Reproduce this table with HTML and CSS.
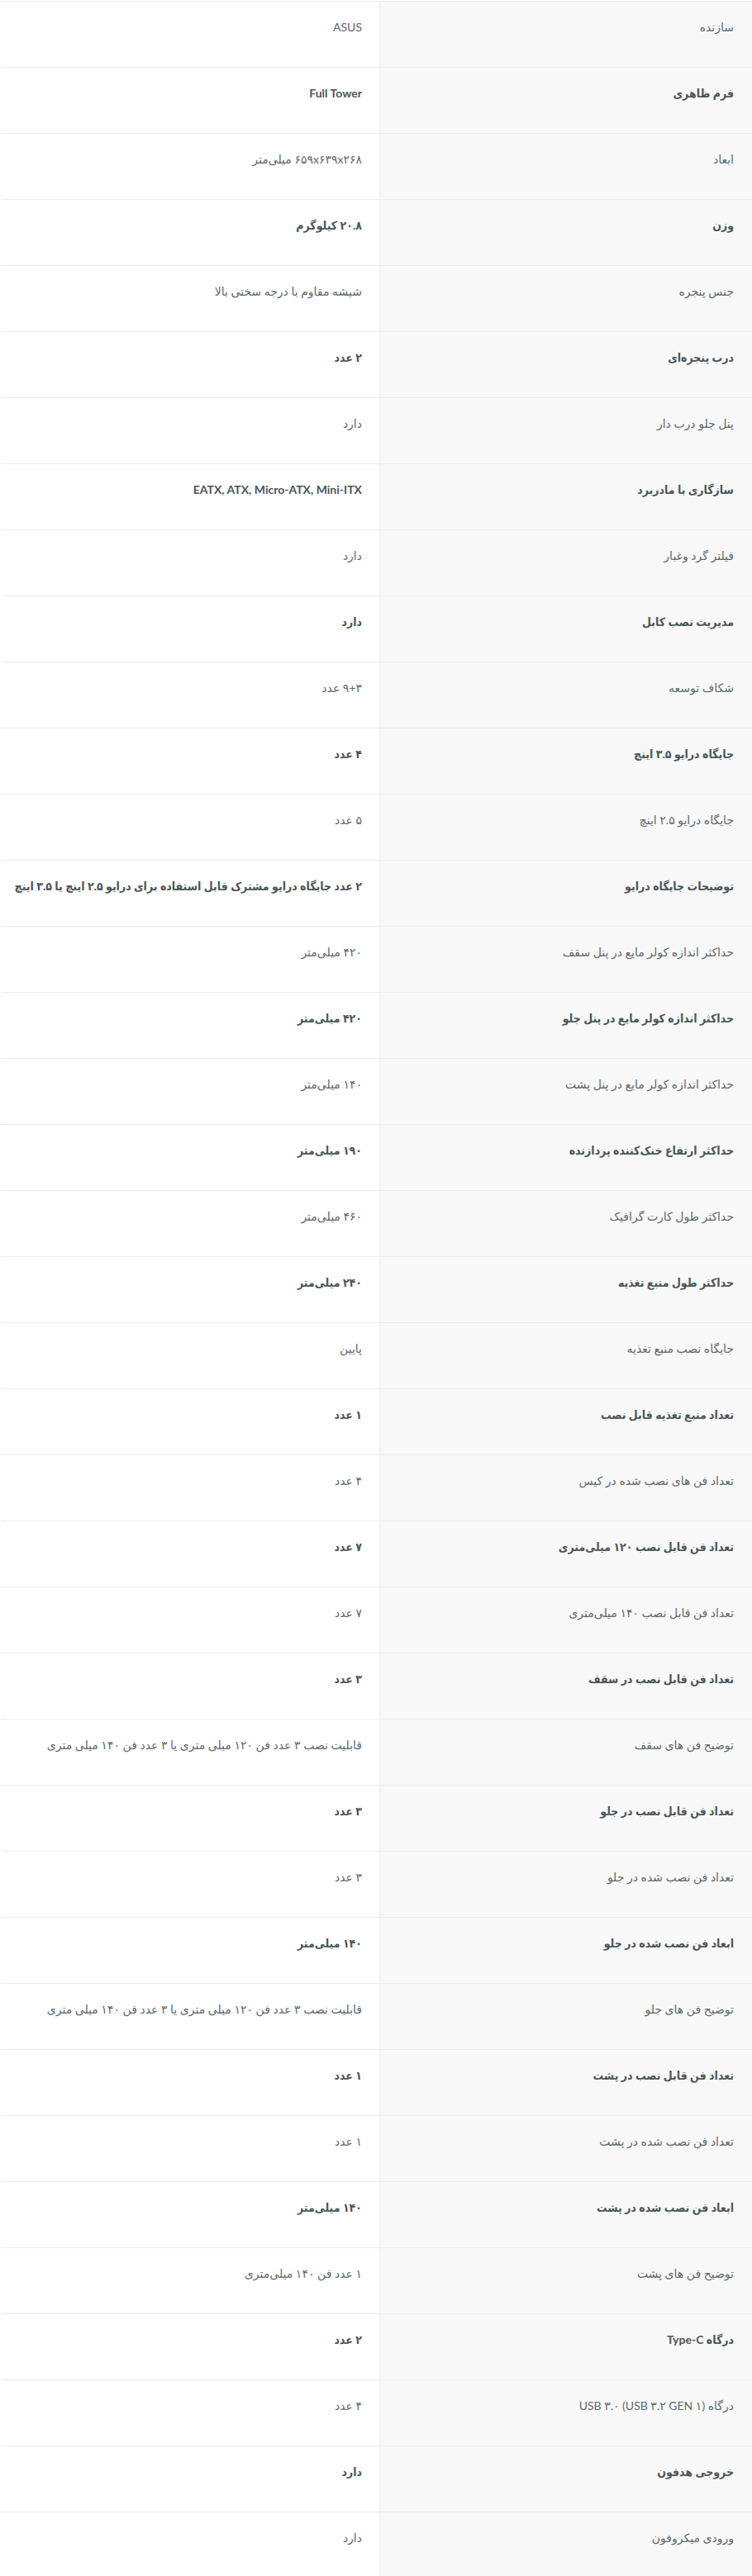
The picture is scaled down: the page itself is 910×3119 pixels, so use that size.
FILE: index.html
```html
<!DOCTYPE html>
<html lang="fa" dir="rtl">
<head>
    <meta charset="UTF-8">
    <meta name="viewport" content="width=device-width, initial-scale=1.0">
    <title>مشخصات فنی</title>
    <link rel="stylesheet" href="styles.css">
</head>
<body>

    <div class="specs">
        <div class="spec-row">
            <div class="spec-label">سازنده</div>
            <div class="spec-value">ASUS</div>
        </div>
        <div class="spec-row bold">
            <div class="spec-label">فرم ظاهری</div>
            <div class="spec-value">Full Tower</div>
        </div>
        <div class="spec-row">
            <div class="spec-label">ابعاد</div>
            <div class="spec-value">۶۵۹x۶۳۹x۲۶۸ میلی‌متر</div>
        </div>
        <div class="spec-row bold">
            <div class="spec-label">وزن</div>
            <div class="spec-value">۲۰.۸ کیلوگرم</div>
        </div>
        <div class="spec-row">
            <div class="spec-label">جنس پنجره</div>
            <div class="spec-value">شیشه مقاوم با درجه سختی بالا</div>
        </div>
        <div class="spec-row bold">
            <div class="spec-label">درب پنجره‌ای</div>
            <div class="spec-value">۲ عدد</div>
        </div>
        <div class="spec-row">
            <div class="spec-label">پنل جلو درب دار</div>
            <div class="spec-value">دارد</div>
        </div>
        <div class="spec-row bold">
            <div class="spec-label">سازگاری با مادربرد</div>
            <div class="spec-value">EATX, ATX, Micro-ATX, Mini-ITX</div>
        </div>
        <div class="spec-row">
            <div class="spec-label">فیلتر گرد وغبار</div>
            <div class="spec-value">دارد</div>
        </div>
        <div class="spec-row bold">
            <div class="spec-label">مدیریت نصب کابل</div>
            <div class="spec-value">دارد</div>
        </div>
        <div class="spec-row">
            <div class="spec-label">شکاف توسعه</div>
            <div class="spec-value">۹+۳ عدد</div>
        </div>
        <div class="spec-row bold">
            <div class="spec-label">جایگاه درایو ۳.۵ اینچ</div>
            <div class="spec-value">۴ عدد</div>
        </div>
        <div class="spec-row">
            <div class="spec-label">جایگاه درایو ۲.۵ اینچ</div>
            <div class="spec-value">۵ عدد</div>
        </div>
        <div class="spec-row bold">
            <div class="spec-label">توضیحات جایگاه درایو</div>
            <div class="spec-value">۲ عدد جایگاه درایو مشترک قابل استفاده برای درایو ۲.۵ اینچ یا ۳.۵ اینچ</div>
        </div>
        <div class="spec-row">
            <div class="spec-label">حداکثر اندازه کولر مایع در پنل سقف</div>
            <div class="spec-value">۴۲۰ میلی‌متر</div>
        </div>
        <div class="spec-row bold">
            <div class="spec-label">حداکثر اندازه کولر مایع در پنل جلو</div>
            <div class="spec-value">۴۲۰ میلی‌متر</div>
        </div>
        <div class="spec-row">
            <div class="spec-label">حداکثر اندازه کولر مایع در پنل پشت</div>
            <div class="spec-value">۱۴۰ میلی‌متر</div>
        </div>
        <div class="spec-row bold">
            <div class="spec-label">حداکثر ارتفاع خنک‌کننده پردازنده</div>
            <div class="spec-value">۱۹۰ میلی‌متر</div>
        </div>
        <div class="spec-row">
            <div class="spec-label">حداکثر طول کارت گرافیک</div>
            <div class="spec-value">۴۶۰ میلی‌متر</div>
        </div>
        <div class="spec-row bold">
            <div class="spec-label">حداکثر طول منبع تغذیه</div>
            <div class="spec-value">۲۴۰ میلی‌متر</div>
        </div>
        <div class="spec-row">
            <div class="spec-label">جایگاه نصب منبع تغذیه</div>
            <div class="spec-value">پایین</div>
        </div>
        <div class="spec-row bold">
            <div class="spec-label">تعداد منبع تغذیه قابل نصب</div>
            <div class="spec-value">۱ عدد</div>
        </div>
        <div class="spec-row">
            <div class="spec-label">تعداد فن های نصب شده در کیس</div>
            <div class="spec-value">۴ عدد</div>
        </div>
        <div class="spec-row bold">
            <div class="spec-label">تعداد فن قابل نصب ۱۲۰ میلی‌متری</div>
            <div class="spec-value">۷ عدد</div>
        </div>
        <div class="spec-row">
            <div class="spec-label">تعداد فن قابل نصب ۱۴۰ میلی‌متری</div>
            <div class="spec-value">۷ عدد</div>
        </div>
        <div class="spec-row bold">
            <div class="spec-label">تعداد فن قابل نصب در سقف</div>
            <div class="spec-value">۳ عدد</div>
        </div>
        <div class="spec-row">
            <div class="spec-label">توضیح فن های سقف</div>
            <div class="spec-value">قابلیت نصب ۳ عدد فن ۱۲۰ میلی متری یا ۳ عدد فن ۱۴۰ میلی متری</div>
        </div>
        <div class="spec-row bold">
            <div class="spec-label">تعداد فن قابل نصب در جلو</div>
            <div class="spec-value">۳ عدد</div>
        </div>
        <div class="spec-row">
            <div class="spec-label">تعداد فن نصب شده در جلو</div>
            <div class="spec-value">۳ عدد</div>
        </div>
        <div class="spec-row bold">
            <div class="spec-label">ابعاد فن نصب شده در جلو</div>
            <div class="spec-value">۱۴۰ میلی‌متر</div>
        </div>
        <div class="spec-row">
            <div class="spec-label">توضیح فن های جلو</div>
            <div class="spec-value">قابلیت نصب ۳ عدد فن ۱۲۰ میلی متری یا ۳ عدد فن ۱۴۰ میلی متری</div>
        </div>
        <div class="spec-row bold">
            <div class="spec-label">تعداد فن قابل نصب در پشت</div>
            <div class="spec-value">۱ عدد</div>
        </div>
        <div class="spec-row">
            <div class="spec-label">تعداد فن نصب شده در پشت</div>
            <div class="spec-value">۱ عدد</div>
        </div>
        <div class="spec-row bold">
            <div class="spec-label">ابعاد فن نصب شده در پشت</div>
            <div class="spec-value">۱۴۰ میلی‌متر</div>
        </div>
        <div class="spec-row">
            <div class="spec-label">توضیح فن های پشت</div>
            <div class="spec-value">۱ عدد فن ۱۴۰ میلی‌متری</div>
        </div>
        <div class="spec-row bold">
            <div class="spec-label">درگاه Type-C</div>
            <div class="spec-value">۲ عدد</div>
        </div>
        <div class="spec-row">
            <div class="spec-label">درگاه USB ۳.۰ (USB ۳.۲ GEN ۱)</div>
            <div class="spec-value">۴ عدد</div>
        </div>
        <div class="spec-row bold">
            <div class="spec-label">خروجی هدفون</div>
            <div class="spec-value">دارد</div>
        </div>
        <div class="spec-row">
            <div class="spec-label">ورودی میکروفون</div>
            <div class="spec-value">دارد</div>
        </div>
    </div>

</body>
</html>
```

FILE: styles.css
```css
body {
    margin: 0;
    font-family: Lato, "DejaVu Sans", sans-serif;
    font-size: 14px;
    color: #5d686b;
    background-color: #fff;
}

.specs {
    padding-top: 1px;
    margin-left: 1px;
}

.spec-row {
    display: grid;
    grid-template-columns: 1fr 458px;
    height: 80px;
    box-sizing: border-box;
    border-top: 1px solid #ececec;
}

.spec-label {
    background-color: #f8f8f8;
    border-left: 1px solid #ececec;
    padding: 19px 22px 0 22px;
    line-height: 24px;
}

.spec-value {
    padding: 19px 21px 0 21px;
    line-height: 24px;
    white-space: nowrap;
}

.spec-row.bold {
    font-weight: bold;
    font-family: Lato, "DejaVu Sans Condensed", "DejaVu Sans", sans-serif;
    font-stretch: condensed;
    color: #4a5659;
}
```
